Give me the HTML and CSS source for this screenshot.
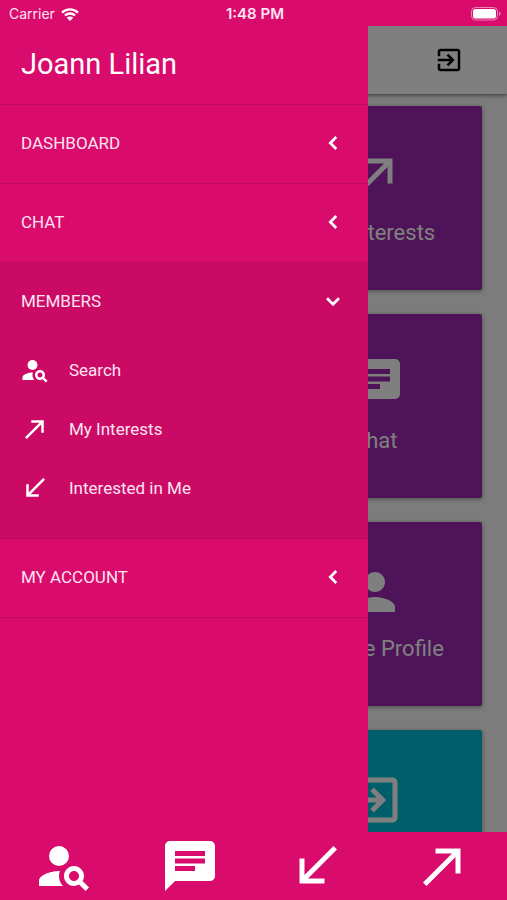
FILE: index.html
```html
<!DOCTYPE html>
<html lang="en">
<head>
    <meta charset="UTF-8">
    <meta name="viewport" content="width=device-width, initial-scale=1.0">
    <title>Members</title>
    <link rel="stylesheet" href="styles.css">
</head>
<body>
    <!-- shared icons -->
    <svg class="sprite" aria-hidden="true">
        <symbol id="icon-exit" viewBox="0 0 24 24">
            <path d="M10.09 15.59L11.5 17l5-5-5-5-1.41 1.41L12.67 11H3v2h9.67l-2.58 2.59zM19 3H5c-1.11 0-2 .9-2 2v4h2V5h14v14H5v-4H3v4c0 1.1.89 2 2 2h14c1.1 0 2-.9 2-2V5c0-1.1-.9-2-2-2z"/>
        </symbol>
        <symbol id="icon-made" viewBox="0 0 24 24">
            <path d="M9 5v2h6.59L4 18.59 5.41 20 17 8.41V15h2V5z"/>
        </symbol>
        <symbol id="icon-received" viewBox="0 0 24 24">
            <path d="M20 5.41L18.59 4 7 15.59V9H5v10h10v-2H8.41z"/>
        </symbol>
        <symbol id="icon-chat" viewBox="0 0 24 24">
            <path d="M20 2H4c-1.1 0-1.99.9-1.99 2L2 22l4-4h14c1.1 0 2-.9 2-2V4c0-1.1-.9-2-2-2zM6 9h12v2H6V9zm8 5H6v-2h8v2zm4-6H6V6h12v2z"/>
        </symbol>
        <symbol id="icon-person" viewBox="0 0 24 24">
            <path d="M12 12c2.21 0 4-1.79 4-4s-1.79-4-4-4-4 1.79-4 4 1.79 4 4 4zm0 2c-2.67 0-8 1.34-8 4v2h16v-2c0-2.66-5.33-4-8-4z"/>
        </symbol>
        <symbol id="icon-search" viewBox="0 0 24 24">
            <circle cx="10" cy="8" r="4"/>
            <path d="M10.35 14.01C7.62 13.91 2 15.27 2 18v2h9.54c-2.47-2.76-1.23-5.89-1.19-5.99zM19.43 18.02c.36-.59.57-1.28.57-2.02 0-2.21-1.79-4-4-4s-4 1.79-4 4 1.79 4 4 4c.74 0 1.43-.22 2.02-.57L20.59 22 22 20.59l-2.57-2.57zM16 18c-1.1 0-2-.9-2-2s.9-2 2-2 2 .9 2 2-.9 2-2 2z"/>
        </symbol>
        <symbol id="icon-left" viewBox="0 0 24 24">
            <path d="M15 6.5L9.5 12l5.5 5.5" fill="none" stroke="currentColor" stroke-width="2.5"/>
        </symbol>
        <symbol id="icon-down" viewBox="0 0 24 24">
            <path d="M6.5 9.5L12 15l5.5-5.5" fill="none" stroke="currentColor" stroke-width="2.5"/>
        </symbol>
    </svg>

    <div class="status-bar">
        <div class="carrier">
            <span>Carrier</span>
            <svg class="wifi" viewBox="0 0 18 13" aria-hidden="true">
                <path d="M1 4.6a11.5 11.5 0 0 1 16 0M3.9 7.5a7.4 7.4 0 0 1 10.2 0" fill="none" stroke="currentColor" stroke-width="2.4"/>
                <path d="M9 13L5.8 9.800a4.6 4.6 0 0 1 6.4 0z"/>
            </svg>
        </div>
        <div class="time">1:48 PM</div>
        <div class="battery">
            <svg viewBox="0 0 30 14" aria-hidden="true">
                <rect x="0.5" y="0.5" width="26" height="12.5" rx="4" fill="none" stroke="currentColor" opacity="0.5"/>
                <rect x="2" y="2" width="23" height="9.5" rx="2.5"/>
                <path d="M28 4.5c2 .8 2 3.7 0 4.5z" opacity="0.5"/>
            </svg>
        </div>
    </div>

    <div class="screen">
        <header class="toolbar">
            <button class="toolbar-btn" type="button" aria-label="Log out">
                <svg class="icon"><use href="#icon-exit"/></svg>
            </button>
        </header>

        <main class="cards">
            <a class="card" href="#">
                <svg class="icon-lg"><use href="#icon-made"/></svg>
                <span>My Interests</span>
            </a>
            <a class="card" href="#">
                <svg class="icon-lg"><use href="#icon-chat"/></svg>
                <span>Chat</span>
            </a>
            <a class="card" href="#">
                <svg class="icon-lg"><use href="#icon-person"/></svg>
                <span>Update Profile</span>
            </a>
            <a class="card card-teal" href="#" aria-label="Log out">
                <svg class="icon-lg"><use href="#icon-exit"/></svg>
            </a>
        </main>

        <div class="backdrop"></div>

        <nav class="drawer">
            <h1 class="drawer-title">Joann Lilian</h1>
            <div class="group">
                <button class="group-btn" type="button">DASHBOARD <svg class="chevron"><use href="#icon-left"/></svg></button>
            </div>
            <div class="group">
                <button class="group-btn" type="button">CHAT <svg class="chevron"><use href="#icon-left"/></svg></button>
            </div>
            <div class="group open">
                <button class="group-btn" type="button" aria-expanded="true">MEMBERS <svg class="chevron"><use href="#icon-down"/></svg></button>
                <ul class="sub-menu">
                    <li><a href="#"><svg class="icon"><use href="#icon-search"/></svg>Search</a></li>
                    <li><a href="#"><svg class="icon"><use href="#icon-made"/></svg>My Interests</a></li>
                    <li><a href="#"><svg class="icon"><use href="#icon-received"/></svg>Interested in Me</a></li>
                </ul>
            </div>
            <div class="group">
                <button class="group-btn" type="button">MY ACCOUNT <svg class="chevron"><use href="#icon-left"/></svg></button>
            </div>
        </nav>
    </div>

    <nav class="tab-bar">
        <a href="#" aria-label="Search"><svg class="icon-lg"><use href="#icon-search"/></svg></a>
        <a href="#" aria-label="Chat"><svg class="icon-lg"><use href="#icon-chat"/></svg></a>
        <a href="#" aria-label="Interested in Me"><svg class="icon-lg"><use href="#icon-received"/></svg></a>
        <a href="#" aria-label="My Interests"><svg class="icon-lg"><use href="#icon-made"/></svg></a>
    </nav>
</body>
</html>
```
FILE: styles.css
```css
* {
    margin: 0;
    padding: 0;
    box-sizing: border-box;
}

body {
    display: flex;
    flex-direction: column;
    height: 100vh;
    overflow: hidden;
    font-family: Roboto, sans-serif;
    background: #d90b6c;
    color: #fff;
}

a {
    color: inherit;
    text-decoration: none;
}

button {
    border: none;
    background: none;
    color: inherit;
    font: inherit;
    cursor: pointer;
}

svg {
    display: block;
    fill: currentColor;
}

.sprite {
    position: absolute;
    width: 0;
    height: 0;
}

.icon {
    width: 30px;
    height: 30px;
}

.icon-lg {
    width: 60px;
    height: 60px;
}

/* status bar */
.status-bar {
    display: grid;
    grid-template-columns: 1fr auto 1fr;
    align-items: center;
    height: 26px;
    padding: 2px 6px 0 9px;
    font-family: Inter, sans-serif;
    font-size: 14px;
    line-height: 20px;
    color: #ffe3f1;
}

.carrier {
    display: flex;
    align-items: center;
    gap: 6px;
}

.wifi {
    width: 18px;
    height: 13px;
    color: #fff;
}

.time {
    font-size: 15px;
    font-weight: 600;
}

.battery {
    justify-self: end;
    color: #fff;
}

.battery svg {
    width: 30px;
    height: 14px;
}

/* page under the drawer */
.screen {
    position: relative;
    flex: 1;
    min-height: 0;
    overflow: hidden;
    background: #f8f8f8;
}

.toolbar {
    display: flex;
    justify-content: flex-end;
    align-items: center;
    height: 68px;
    padding: 0 43px;
    background: #fff;
    color: #000;
    box-shadow: 0 1px 4px rgba(0, 0, 0, 0.6);
}

.cards {
    display: grid;
    grid-template-columns: 1fr 1fr;
    gap: 24px 28px;
    padding: 12px 25px;
}

.card {
    grid-column: 2;
    display: flex;
    flex-direction: column;
    align-items: center;
    gap: 12px;
    height: 184px;
    padding-top: 40px;
    border-radius: 2px;
    background: #9c27b0;
    box-shadow: 0 1px 4px rgba(0, 0, 0, 0.4);
    font-size: 22px;
    line-height: 30px;
}

.card-teal {
    background: #00bcd4;
}

.backdrop {
    position: absolute;
    inset: 0;
    background: rgba(0, 0, 0, 0.5);
}

/* drawer */
.drawer {
    position: absolute;
    top: 0;
    bottom: 0;
    left: 0;
    width: 368px;
    max-width: 80%;
    background: #d90b6c;
    overflow-y: auto;
}

.drawer-title {
    height: 79px;
    padding: 20px 21px 0;
    border-bottom: 1px solid #bd095f;
    font-size: 29px;
    line-height: 36px;
    font-weight: 400;
}

.group {
    border-bottom: 1px solid #bd095f;
}

.group.open {
    padding-bottom: 20px;
    background: #ca0a65;
}

.group-btn {
    display: flex;
    justify-content: space-between;
    align-items: center;
    width: 100%;
    height: 78px;
    padding: 0 22px 2px 21px;
    font-size: 17px;
    line-height: 24px;
    color: #ffe3f1;
}

.chevron {
    width: 26px;
    height: 26px;
    color: #fff;
}

.sub-menu {
    list-style: none;
}

.sub-menu a {
    display: flex;
    align-items: center;
    gap: 19px;
    height: 59px;
    padding: 0 20px 2px;
    font-size: 17px;
    line-height: 24px;
    color: #ffe3f1;
}

.sub-menu .icon {
    color: #fff;
}

/* bottom tabs */
.tab-bar {
    display: grid;
    grid-template-columns: repeat(4, 1fr);
    justify-items: center;
    align-items: center;
    height: 68px;
    padding: 0 1px;
}
```
